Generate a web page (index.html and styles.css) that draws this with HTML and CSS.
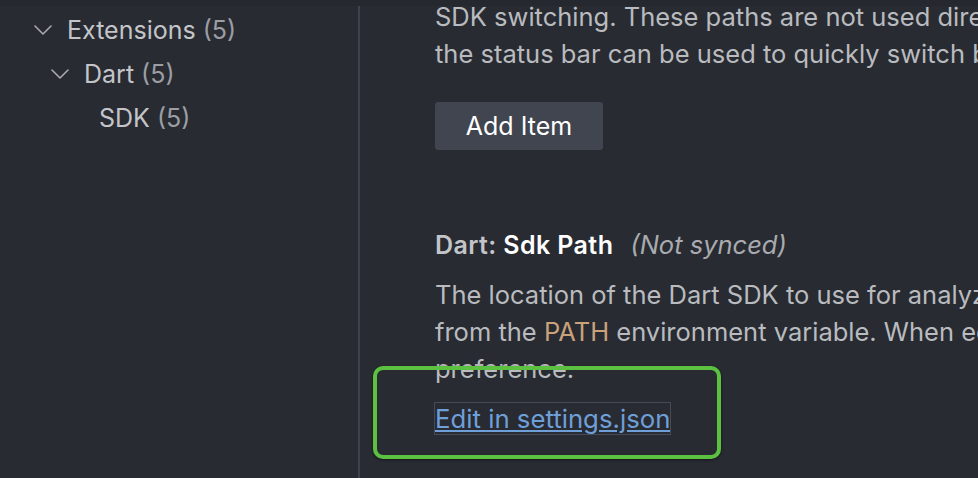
FILE: index.html
```html
<!DOCTYPE html>
<html>
<head>
<meta charset="utf-8">
<link rel="stylesheet" href="styles.css">
</head>
<body>
<div class="topband"></div>
<div class="main">
  <div class="tree">
    <div class="row lvl1">
      <span class="twist"><svg width="18" height="10" viewBox="0 0 18 10"><path d="M1 1 L9 9 L17 1" fill="none" stroke="#a9abaf" stroke-width="1.6" stroke-linejoin="round" stroke-linecap="round"/></svg></span>
      <span class="label">Extensions <span class="count">(5)</span></span>
    </div>
    <div class="row lvl2">
      <span class="twist"><svg width="18" height="10" viewBox="0 0 18 10"><path d="M1 1 L9 9 L17 1" fill="none" stroke="#a9abaf" stroke-width="1.6" stroke-linejoin="round" stroke-linecap="round"/></svg></span>
      <span class="label">Dart <span class="count">(5)</span></span>
    </div>
    <div class="row lvl3">
      <span class="twist"></span>
      <span class="label">SDK <span class="count">(5)</span></span>
    </div>
  </div>
  <div class="content">
    <div class="desc first">
      <span class="line">SDK switching. These paths are not used directly, but the list of SDKs shown in</span>
      <span class="line">the status bar can be used to quickly switch between them.</span>
    </div>
    <button class="btn">Add Item</button>
    <div class="title"><span class="cat">Dart: </span><span class="name">Sdk Path</span><span class="sync">(Not synced)</span></div>
    <div class="desc second">
      <span class="line">The location of the Dart SDK to use for analyzing and executing code. If blank,</span>
      <span class="line">from the <span class="code">PATH</span> environment variable. When editing the setting, use this</span>
      <span class="line">preference.</span>
    </div>
    <div class="linkrow"><a class="link" href="#">Edit in settings.json</a></div>
  </div>
</div>
<div class="highlight"></div>
</body>
</html>
```
FILE: styles.css
```css
html, body {
  margin: 0;
  padding: 0;
  width: 978px;
  height: 478px;
  overflow: hidden;
  background: #282b32;
  font-family: Inter, "Noto Sans", sans-serif;
}
.topband {
  height: 6px;
  background: #25282e;
}
.main {
  display: flex;
  height: 472px;
}
.tree {
  width: 358px;
  flex: none;
  padding-top: 2px;
  box-sizing: border-box;
}
.row {
  display: flex;
  align-items: center;
  height: 44px;
  font-size: 25px;
  color: #c4c5c9;
  white-space: nowrap;
}
.lvl1 { padding-left: 34px; }
.lvl2 { padding-left: 51px; }
.lvl3 { padding-left: 66px; }
.twist {
  width: 33px;
  flex: none;
  display: flex;
  align-items: center;
}
.twist svg { display: block; }
.count { color: #9c9ea3; }
.content {
  flex: 1;
  border-left: 2px solid #3e424b;
  padding-left: 75px;
  overflow: hidden;
  min-width: 0;
}
.desc {
  font-size: 25.5px;
  line-height: 37px;
  color: #b9bbbf;
  white-space: nowrap;
}
.line { display: block; }
.desc.first {
  margin-top: -8px;
}
.desc.second {
  margin-top: 12px;
}
.code {
  color: #c9a27a;
}
.btn {
  display: block;
  margin-top: 30px;
  width: 168px;
  height: 48px;
  border: none;
  border-radius: 3px;
  background: #41454f;
  color: #ffffff;
  font-family: Inter, "Noto Sans", sans-serif;
  font-size: 25px;
  padding: 0;
}
.title {
  margin-top: 76px;
  font-size: 25px;
  line-height: 37px;
  white-space: nowrap;
}
.cat {
  color: #c4c5c9;
  font-weight: 600;
  letter-spacing: 0.4px;
}
.name {
  color: #ffffff;
  font-weight: 600;
  letter-spacing: 0.4px;
}
.sync {
  margin-left: 17px;
  color: #a9abaf;
  font-style: italic;
  font-size: 25.5px;
}
.linkrow {
  margin-top: 13px;
  font-size: 25.75px;
  line-height: 37px;
}
.link {
  color: #6f9fd8;
  text-decoration: underline;
  outline: 1px solid #454a56;
}
.highlight {
  position: absolute;
  left: 373px;
  top: 366px;
  width: 348px;
  height: 93px;
  box-sizing: border-box;
  border: 4px solid #5cc041;
  border-radius: 10px;
  box-shadow: 0 1px 3px rgba(0,0,0,0.5);
}
```
